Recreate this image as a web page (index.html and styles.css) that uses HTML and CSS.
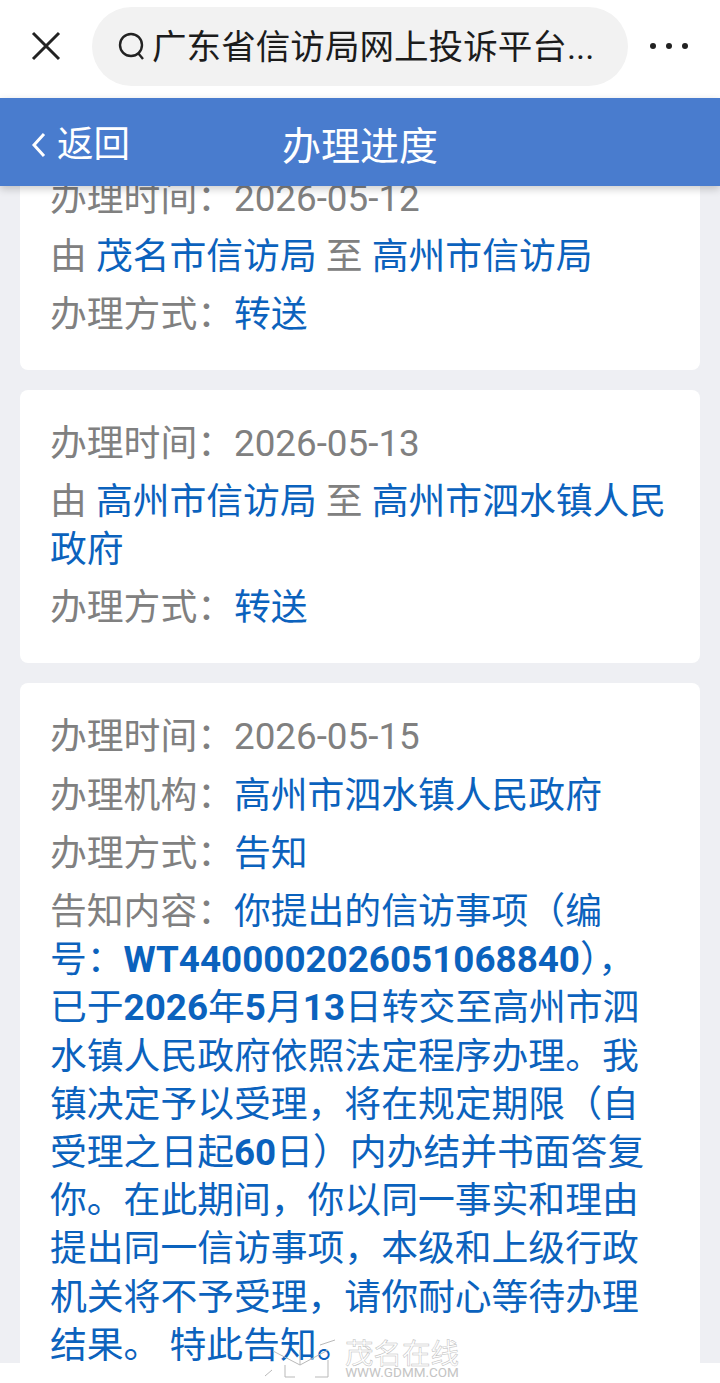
FILE: index.html
```html
<!DOCTYPE HTML>
<html lang="zh-CN">
<head>
    <meta charset="UTF-8">
    <meta name="viewport" content="width=device-width, initial-scale=1, user-scalable=no">
    <title>办理进度</title>
    <link rel="stylesheet" href="styles.css">
</head>
<body>

    <!-- 浏览器顶栏 -->
    <div class="top-bar">
        <svg class="close-icon" width="30" height="30" viewBox="0 0 30 30">
            <path d="M2 2 L28 28 M28 2 L2 28" stroke="#222" stroke-width="3" fill="none"/>
        </svg>
        <div class="search-box">
            <svg class="search-icon" width="30" height="30" viewBox="0 0 30 30">
                <circle cx="14" cy="14" r="11" stroke="#222" stroke-width="2.4" fill="none"/>
                <path d="M21 22 L26 28" stroke="#222" stroke-width="2.4" fill="none"/>
            </svg>
            <span class="search-text">广东省信访局网上投诉平台...</span>
        </div>
        <div class="more-dots"><i></i><i></i><i></i></div>
    </div>

    <!-- 页面标题 -->
    <div class="page-header">
        <div class="back-link">
            <svg width="16" height="26" viewBox="0 0 16 26">
                <path d="M13 2 L3 13 L13 24" stroke="#fff" stroke-width="3" fill="none"/>
            </svg>
            <span>返回</span>
        </div>
        <div class="page-title">办理进度</div>
    </div>

    <!-- 办理记录 -->
    <div class="record-list">
        <div class="card card-first">
            <div class="row">办理时间：2026-05-12</div>
            <div class="row">由 <span class="blue">茂名市信访局</span> 至 <span class="blue">高州市信访局</span></div>
            <div class="row">办理方式：<span class="blue">转送</span></div>
        </div>
        <div class="card">
            <div class="row">办理时间：2026-05-13</div>
            <div class="row">由 <span class="blue">高州市信访局</span> 至 <span class="blue">高州市泗水镇人民政府</span></div>
            <div class="row">办理方式：<span class="blue">转送</span></div>
        </div>
        <div class="card">
            <div class="row">办理时间：2026-05-15</div>
            <div class="row">办理机构：<span class="blue">高州市泗水镇人民政府</span></div>
            <div class="row">办理方式：<span class="blue">告知</span></div>
            <div class="row">告知内容：<span class="blue">你提出的信访事项（编号：<b>WT4400002026051068840</b>），已于<b>2026</b>年<b>5</b>月<b>13</b>日转交至高州市泗水镇人民政府依照法定程序办理。我镇决定予以受理，将在规定期限（自受理之日起<b>60</b>日）内办结并书面答复你。在此期间，你以同一事实和理由提出同一信访事项，本级和上级行政机关将不予受理，请你耐心等待办理结果。 特此告知。</span></div>
        </div>
    </div>

    <div class="bottom-strip"></div>

    <!-- 图片水印 -->
    <svg class="wm-logo" width="80" height="50" viewBox="0 0 80 50">
        <path d="M8 13 L35 27 L63 12 M35 27 L35 12 M55 7 L70 2 M20 27 L20 39 L30 39 M63 22 L63 39 L50 39 M0 38 L7 32" stroke="#b9b9b9" stroke-width="1" fill="none"/>
    </svg>
    <div class="watermark">
        <div class="wm-name">茂名在线</div>
        <div class="wm-url">WWW.GDMM.COM</div>
    </div>

</body>
</html>
```

FILE: styles.css
```css
html, body {
    margin: 0;
    height: 1383px;
    overflow: hidden;
}
body {
    position: relative;
    background-color: #eeeff3;
    font-family: Roboto, "Noto Sans CJK SC", sans-serif;
}
.top-bar {
    display: flex;
    align-items: center;
    height: 98px;
    padding: 0 0 6px 31px;
    box-sizing: border-box;
    background: #fff;
}
.close-icon {
    flex: none;
}
.search-box {
    display: flex;
    align-items: center;
    width: 536px;
    height: 79px;
    margin-left: 31px;
    padding-left: 25px;
    box-sizing: border-box;
    background: #f2f2f2;
    border-radius: 40px;
}
.search-icon {
    flex: none;
    margin-right: 5px;
}
.search-text {
    margin-top: -4px;
    font-size: 34.6px;
    color: #1c1c1c;
    white-space: nowrap;
}
.more-dots {
    display: flex;
    gap: 10px;
    margin-left: 22px;
}
.more-dots i {
    width: 6px;
    height: 6px;
    background: #222;
    border-radius: 50%;
}
.page-header {
    position: relative;
    z-index: 2;
    display: flex;
    align-items: center;
    justify-content: center;
    height: 88px;
    padding-top: 10px;
    box-sizing: border-box;
    background: #497cce;
    box-shadow: 0 3px 8px rgba(0, 0, 0, 0.2);
    color: #fff;
}
.back-link {
    position: absolute;
    left: 31px;
    top: 24px;
    display: flex;
    align-items: center;
    gap: 10px;
    font-size: 36.5px;
    line-height: 46px;
}
.page-title {
    font-size: 39px;
    line-height: 78px;
}
.record-list {
    display: flex;
    flex-direction: column;
    gap: 20px;
    padding: 0 20px;
}
.card {
    padding: 30px 30px 21px;
    background: #fff;
    border-radius: 8px;
}
.card-first {
    margin-top: -41px;
    padding-bottom: 20px;
}
.row {
    margin-bottom: 10px;
    font-size: 36.8px;
    line-height: 48.2px;
    color: #808080;
}
.blue {
    color: #0b62bd;
}
.bottom-strip {
    position: absolute;
    left: 0;
    right: 0;
    top: 1363px;
    height: 20px;
    background: #fff;
}
.wm-logo {
    position: absolute;
    left: 265px;
    top: 1338px;
}
.watermark {
    position: absolute;
    left: 345px;
    top: 1342px;
    color: #fff;
    text-align: center;
}
.wm-name {
    font-size: 28.5px;
    line-height: 26px;
    -webkit-text-stroke: 0.5px #bdbdbd;
}
.wm-url {
    margin-top: -3px;
    font-size: 13.5px;
    line-height: 14px;
    color: #c4c4c4;
}
```
